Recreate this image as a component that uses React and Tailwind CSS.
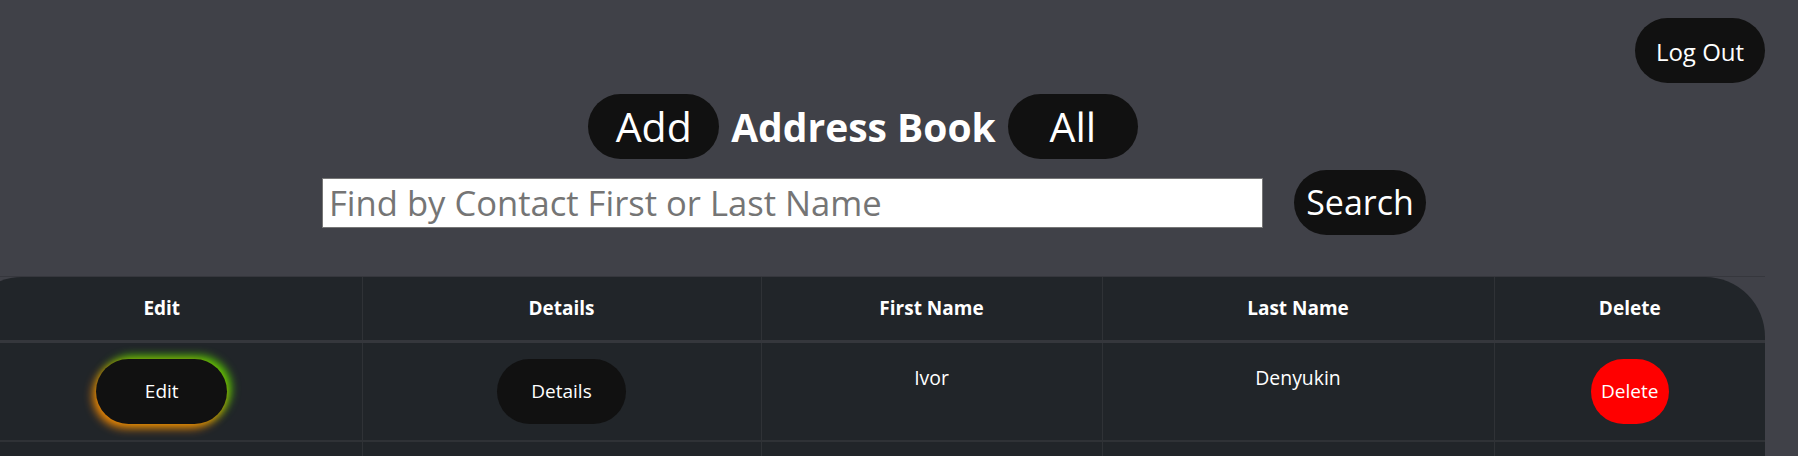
import { useState } from "react";

const contacts = [
  { id: 1, firstName: "Ivor", lastName: "Denyukin" },
];

const pill = "flex items-center justify-center h-[65px] rounded-full bg-[#111111] text-white";

const App = () => {
  const [search, setSearch] = useState("");

  return (
    <div className="min-h-screen w-full bg-[#404148] font-['Open_Sans',sans-serif] overflow-hidden">
      <div className="w-[1765px]">
        <div className="flex justify-end pt-[18px]">
          <button className={`${pill} w-[130px] text-[24px] pt-[3px]`}>Log Out</button>
        </div>

        <div className="flex items-center justify-center gap-3 mt-[11px] pr-[39px]">
          <button className={`${pill} w-[131px] text-[41px]`}>Add</button>
          <h1 className="text-white text-[39px] font-bold leading-none">Address Book</h1>
          <button className={`${pill} w-[130px] text-[41px]`}>All</button>
        </div>

        <div className="flex items-center justify-center gap-[31px] mt-[11px] pr-[17px]">
          <input
            type="text"
            placeholder="Find by Contact First or Last Name"
            value={search}
            onChange={e => setSearch(e.target.value)}
            className="w-[941px] h-[50px] bg-white border border-[#767676] px-[6px] text-[34.6px] text-black placeholder:text-[#757575] outline-none"
          />
          <button className={`${pill} w-[132px] text-[34px]`}>Search</button>
        </div>

        <div className="mt-[41px] w-[1803px] -ml-[38px] border-t border-[#36373d]">
          <table className="table-fixed w-full bg-[#212529] text-white text-center rounded-t-[60px] overflow-hidden border-collapse">
            <colgroup>
              <col className="w-[400px]" />
              <col className="w-[399px]" />
              <col className="w-[341px]" />
              <col className="w-[392px]" />
              <col className="w-[271px]" />
            </colgroup>
            <thead>
              <tr className="h-[64px] border-b-[3px] border-[#35373c] text-[19px] font-bold">
                <th className="border-r border-[#2f3236]">Edit</th>
                <th className="border-r border-[#2f3236]">Details</th>
                <th className="border-r border-[#2f3236]">First Name</th>
                <th className="border-r border-[#2f3236]">Last Name</th>
                <th>Delete</th>
              </tr>
            </thead>
            <tbody className="text-[19.4px]">
              {contacts.map(c => (
                <tr key={c.id} className="h-[100px] border-b-2 border-[#2f3236]">
                  <td className="border-r border-[#2f3236]">
                    <button className={`${pill} w-[131px] mx-auto text-[19px] shadow-[-3px_4px_10px_rgba(255,140,0,0.95),4px_-3px_10px_rgba(90,215,0,0.95)]`}>
                      Edit
                    </button>
                  </td>
                  <td className="border-r border-[#2f3236]">
                    <button className={`${pill} w-[129px] mx-auto text-[19px]`}>Details</button>
                  </td>
                  <td className="border-r border-[#2f3236] align-top pt-[20px]">{c.firstName}</td>
                  <td className="border-r border-[#2f3236] align-top pt-[20px]">{c.lastName}</td>
                  <td>
                    <button className="flex items-center justify-center h-[65px] w-[78px] mx-auto rounded-full bg-[#ff0000] text-white text-[19px]">
                      Delete
                    </button>
                  </td>
                </tr>
              ))}
              <tr className="h-[100px]">
                <td className="border-r border-[#2f3236]" />
                <td className="border-r border-[#2f3236]" />
                <td className="border-r border-[#2f3236]" />
                <td className="border-r border-[#2f3236]" />
                <td />
              </tr>
            </tbody>
          </table>
        </div>
      </div>
    </div>
  );
};

export default App;
